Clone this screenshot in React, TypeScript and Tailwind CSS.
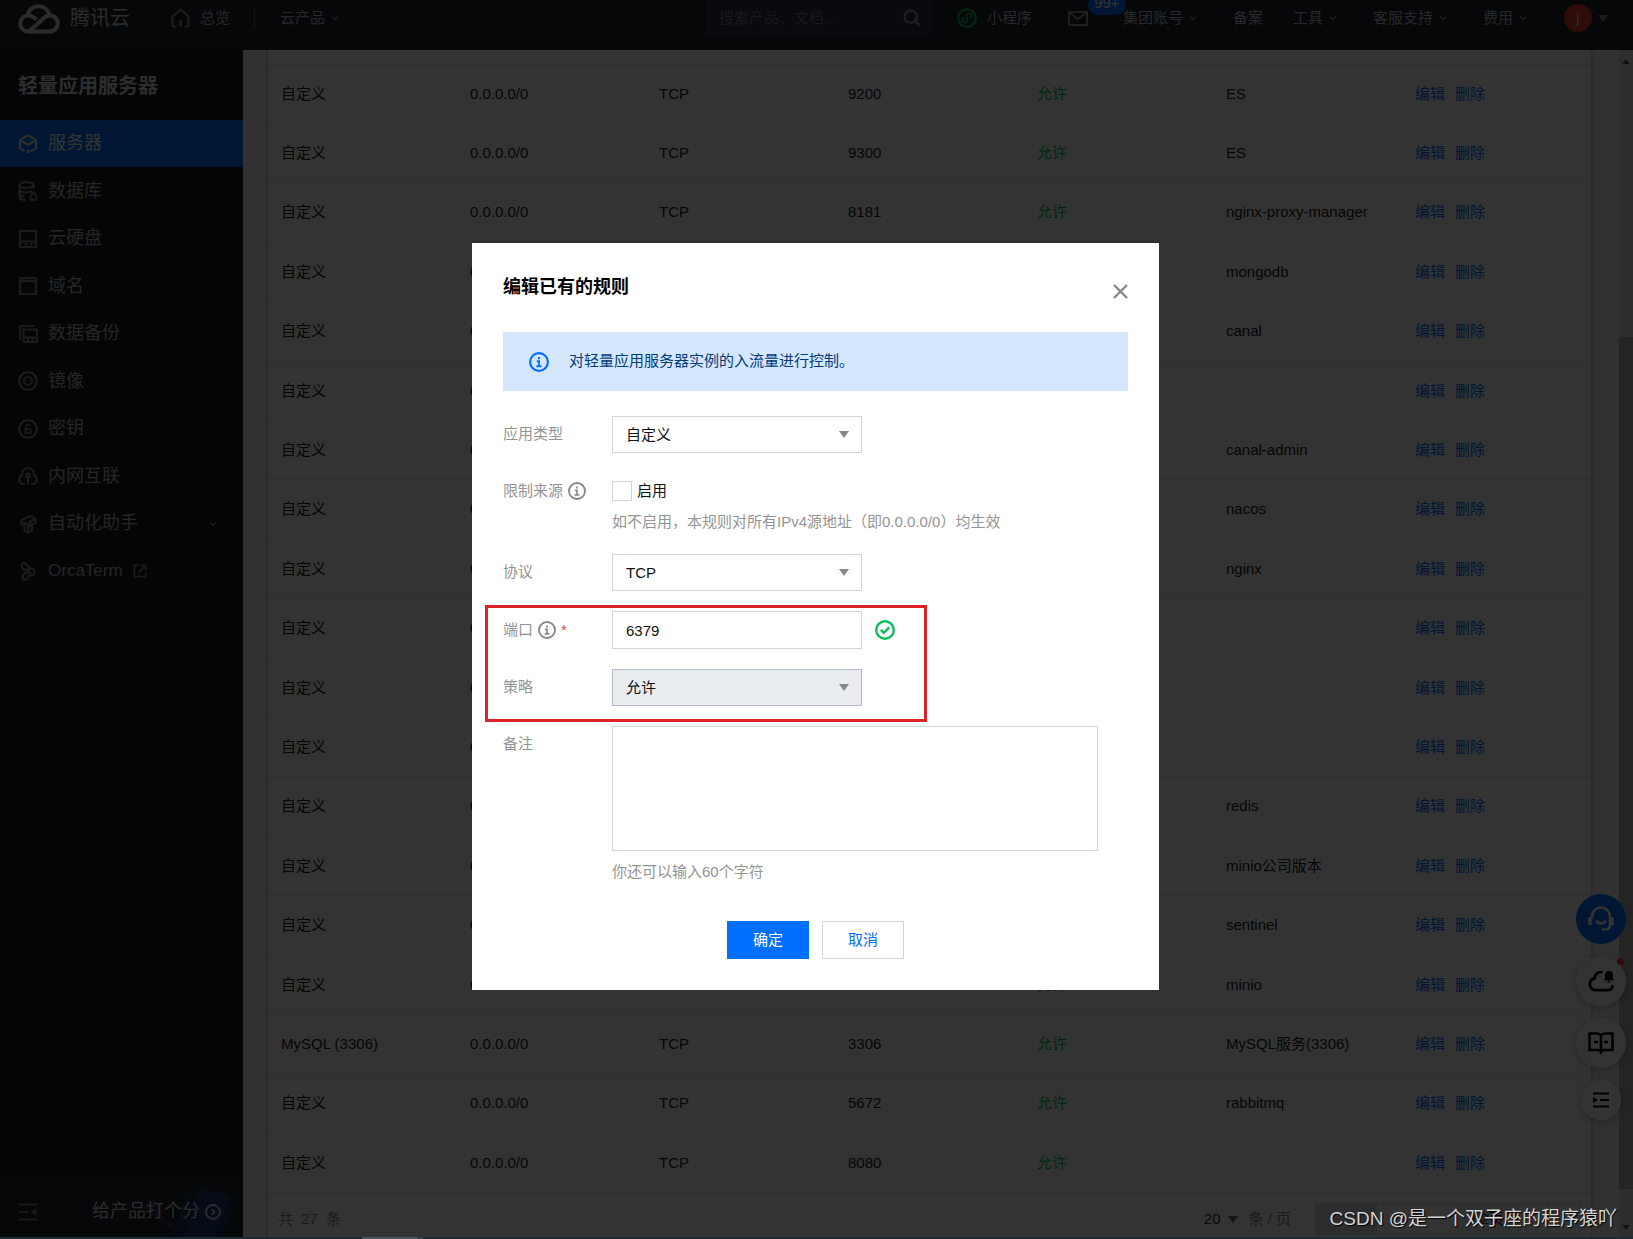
import React, { useState } from "react";

interface Rule {
  type: string;
  port: string;
  note: string;
}

const rules: Rule[] = [
  { type: "自定义", port: "9200", note: "ES" },
  { type: "自定义", port: "9300", note: "ES" },
  { type: "自定义", port: "8181", note: "nginx-proxy-manager" },
  { type: "自定义", port: "", note: "mongodb" },
  { type: "自定义", port: "", note: "canal" },
  { type: "自定义", port: "", note: "" },
  { type: "自定义", port: "", note: "canal-admin" },
  { type: "自定义", port: "", note: "nacos" },
  { type: "自定义", port: "", note: "nginx" },
  { type: "自定义", port: "", note: "" },
  { type: "自定义", port: "", note: "" },
  { type: "自定义", port: "", note: "" },
  { type: "自定义", port: "6379", note: "redis" },
  { type: "自定义", port: "", note: "minio公司版本" },
  { type: "自定义", port: "", note: "sentinel" },
  { type: "自定义", port: "", note: "minio" },
  { type: "MySQL (3306)", port: "3306", note: "MySQL服务(3306)" },
  { type: "自定义", port: "5672", note: "rabbitmq" },
  { type: "自定义", port: "8080", note: "" },
];

const Icon: React.FC<{ children: React.ReactNode; className?: string }> = ({
  children,
  className = "w-5 h-5",
}) => (
  <svg
    className={className}
    viewBox="0 0 20 20"
    fill="none"
    stroke="currentColor"
    strokeWidth={2.2}
    aria-hidden="true"
  >
    {children}
  </svg>
);

const Chevron = () => (
  <svg
    className="w-2 h-2 shrink-0 text-[#83888f]"
    viewBox="0 0 8 8"
    fill="none"
    stroke="currentColor"
    strokeWidth={1.5}
    aria-hidden="true"
  >
    <path d="M1 2.5l3 3 3-3" />
  </svg>
);

const Triangle = ({ className }: { className: string }) => (
  <svg className={className} viewBox="0 0 10 7" fill="currentColor" aria-hidden="true">
    <path d="M0 0h10L5 7z" />
  </svg>
);

const InfoIcon = ({ className }: { className: string }) => (
  <svg className={className} viewBox="0 0 20 20" fill="none" stroke="currentColor" aria-hidden="true">
    <circle cx="10" cy="10" r="8.9" strokeWidth={2.1} />
    <path d="M10 5v2.200M7.800 9.200H10v5M7.400 14.300h5.200" strokeWidth={1.9} />
  </svg>
);

const menu = [
  {
    label: "服务器",
    icon: (
      <>
        <path d="M6.500 17L2 14.300V5.800L10 1.300l8 4.500v8.500l-5 2.900" />
        <path d="M2.500 6.500L10 11l7.500-4.500" />
        <circle cx="10.500" cy="17.600" r="1.900" fill="currentColor" stroke="none" />
      </>
    ),
  },
  {
    label: "数据库",
    icon: (
      <>
        <ellipse cx="8.5" cy="4" rx="7" ry="2.8" />
        <path d="M1.5 4v4.500c0 1.500 3 2.800 7 2.800 2 0 4-.4 5.500-1M15.500 4v4M1.500 8.500v4.300c0 1.500 2 2.300 5 2.600M1.500 12.500v3.700c0 1.500 2.500 2.500 6 2.600M15.500 11.500c-2 2.500-3.200 3.600-3.200 5.200a2 2 0 0 0 2 2h2.400a2 2 0 0 0 2-2c0-1.600-1.200-2.700-3.200-5.200z" />
      </>
    ),
  },
  {
    label: "云硬盘",
    icon: <path d="M2 2h16v16H2zM2 12.500h16M7 15.300h2.500M12 15.300h2.500" />,
  },
  {
    label: "域名",
    icon: <path d="M2 2h16v16H2zM2 5h16M5 3.200v2M8.500 3.200v2" />,
  },
  {
    label: "数据备份",
    icon: <path d="M2 16V2h14M5.500 5.500H19V18H5.500zM5.500 13.500H19M9 15.800h2M13.500 15.800h2" />,
  },
  {
    label: "镜像",
    icon: (
      <>
        <circle cx="10" cy="10" r="8.8" />
        <circle cx="10" cy="10" r="4" />
      </>
    ),
  },
  {
    label: "密钥",
    icon: (
      <>
        <circle cx="10" cy="10" r="8.8" />
        <path d="M7.300 10h5.400v4H7.300zM8.200 10V7.500a1.900 1.900 0 0 1 3.700-.5" strokeWidth={1.7} />
      </>
    ),
  },
  {
    label: "内网互联",
    icon: (
      <>
        <path d="M7 18H5.500A4.500 4.500 0 0 1 4 9.300C4 4.800 6.500 2 10 2s6 2.800 6 7.300A4.500 4.500 0 0 1 14.500 18H13" />
        <circle cx="10" cy="9.5" r="1.8" />
        <path d="M10 11v8" />
      </>
    ),
  },
  {
    label: "自动化助手",
    icon: (
      <path d="M3 6.500L12 2l5.500 2.500v4.500L12 11.500V7.500L17 5M3 6.500V10l3 1.500V9l6 2.500M6.500 12v4.500l3.500 2 4-2V11M10 12v5" />
    ),
  },
  {
    label: "OrcaTerm",
    icon: (
      <path d="M4.500 7C2.500 3.500 4.500.8 7 2.500c2 1.400 4.500 3.500 4.500 5.500S7 9.500 4.500 7zM11 7c4 0 5.500 2 5.500 4s-2.500 3.500-5 4M12 11.500c-4-.5-7.500 1-7.500 4.500s4 3.500 5.500 1c1-1.500 2-3.500 2-5.500z" />
    ),
  },
];

function TopBar() {
  return (
    <header className="h-[50px] shrink-0 bg-[#22262f] text-[#c0c4cc] text-[15px] leading-9">
      <nav className="flex items-center h-9 pl-[18px] pr-[25px]">
        <a href="#home" className="flex items-center gap-2.5 text-[20px] text-[#d5d8de]">
          <svg className="w-[42px] h-[31px]" viewBox="0 0 42 31" fill="none" stroke="currentColor" strokeWidth={4} aria-hidden="true">
            <path d="M10 28.500a8 8 0 1 1 .5-16c3 0 5 1.200 8 4.200" />
            <path d="M9.500 12.500A11.200 11.200 0 0 1 31.500 12" />
            <path d="M10 28.500h22a8 8 0 1 0-5.500-14L11.500 28" />
          </svg>
          腾讯云
        </a>
        <a href="#overview" className="flex items-center gap-2.5 ml-[41px]">
          <svg className="w-[19px] h-5 text-[#9397a0]" viewBox="0 0 19 20" fill="none" stroke="currentColor" strokeWidth={2} aria-hidden="true">
            <path d="M5 18.500H1.500V8.500l8-7 8 7v10H14M9.500 12v7" />
          </svg>
          总览
        </a>
        <span className="w-px h-5 mx-6 bg-[#5a5f6a]" />
        <button type="button" className="flex items-center gap-1.5 ml-px">
          云产品 <Chevron />
        </button>
        <div className="flex items-center gap-9 ml-auto">
          <div className="flex items-center w-[225px] h-9 -mr-2.5 pl-[13px] pr-[10px] bg-[#2c3542]">
            <input
              type="text"
              aria-label="搜索"
              placeholder="搜索产品、文档..."
              className="flex-1 min-w-0 bg-transparent outline-none placeholder:text-[#747b88]"
            />
            <Icon className="w-[18px] h-[18px] text-[#8f949e]">
              <circle cx="8.5" cy="8.5" r="6.8" strokeWidth={2.5} />
              <path d="M13.500 13.500l5 5" strokeWidth={2.8} />
            </Icon>
          </div>
          <a href="#mini" className="flex items-center gap-2.5">
            <Icon className="w-5 h-5 text-[#0abf5b]">
              <circle cx="10" cy="10" r="8.8" />
              <path d="M10 12.500V7.500a2.200 2.200 0 1 1 2.500 2.200M10 7.500v5a2.200 2.200 0 1 1-2.500-2.200" strokeWidth={1.6} />
            </Icon>
            小程序
          </a>
          <a href="#messages" aria-label="99+" className="relative -mr-px">
            <svg className="w-5 h-[15px] text-[#9397a0]" viewBox="0 0 20 15" fill="none" stroke="currentColor" strokeWidth={2} aria-hidden="true">
              <path d="M1 1h18v13H1zM2 2l8 6 8-6" />
            </svg>
            <span className="absolute left-5 -top-4 w-[38px] h-5 rounded-full bg-[#006eff] text-white text-center leading-[15px]">
              99+
            </span>
          </a>
          <button type="button" className="flex items-center gap-1.5">
            集团账号 <Chevron />
          </button>
          <a href="#beian" className="-mr-1.5">
            备案
          </a>
          <button type="button" className="flex items-center gap-1.5">
            工具 <Chevron />
          </button>
          <button type="button" className="flex items-center gap-1.5">
            客服支持 <Chevron />
          </button>
          <button type="button" className="flex items-center gap-1.5 mr-px">
            费用 <Chevron />
          </button>
          <button type="button" className="flex items-center gap-1.5">
            <span className="w-7 h-7 rounded-full bg-[#e03c32] text-center leading-7 text-[#e6e8ec]">j</span>
            <Triangle className="w-2.5 h-[7px] text-[#83888f]" />
          </button>
        </div>
      </nav>
    </header>
  );
}

function Sidebar() {
  return (
    <aside className="flex flex-col w-[243px] shrink-0 bg-[#191c22] text-[18px] text-[#b4b8bf]">
      <h1 className="h-[70px] pl-[18px] text-[20px] leading-[72px] font-bold text-[#dcdee2]">轻量应用服务器</h1>
      <ul>
        {menu.map((item, i) => (
          <li key={item.label} className="h-[47px] even:h-[48px]">
            <a
              href={`#menu-${i}`}
              className={`flex items-center h-full pl-[18px] pr-[26px] gap-[10px] ${
                i === 0 ? "bg-[#006eff] text-white" : ""
              }`}
            >
              <Icon className={`w-5 h-5 ${i === 0 ? "text-[#dcdee2]" : "text-[#81858d]"}`}>{item.icon}</Icon>
              <span className={item.label === "OrcaTerm" ? "text-[17px]" : ""}>{item.label}</span>
              {item.label === "自动化助手" && (
                <span className="ml-auto">
                  <Chevron />
                </span>
              )}
              {item.label === "OrcaTerm" && (
                <Icon className="w-3.5 h-3.5 text-[#81858d]">
                  <path d="M8 2H2v16h16v-6M8 12L17 3M11.500 2H18v6.500" strokeWidth={2.5} />
                </Icon>
              )}
            </a>
          </li>
        ))}
      </ul>
      <div className="relative flex items-center h-[61px] mt-auto pl-[18px] pb-1 pt-2.5 bg-[#22262f] text-[#d5d8de]">
        <svg className="absolute right-0 bottom-0 w-[120px] h-[53px]" viewBox="0 0 120 53" aria-hidden="true">
          <path d="M4 16l12 5 16-7 10 10-4 6 16 12-12-2-14-14z" fill="#343b48" />
          <path d="M46 53L64 10l10-2 2-6 24 4 5 8 8-1-14 40z" fill="#1c3157" />
          <path d="M62 53L76 8l24-2 5 8-14 39z" fill="#203c72" />
        </svg>
        <button type="button" aria-label="收起" className="text-[#81858d]">
          <Icon>
            <path d="M1 2.500h18M1 10h9M1 17.500h18" />
            <path d="M18.500 6.500v7L13 10z" fill="currentColor" stroke="none" />
          </Icon>
        </button>
        <a href="#rate" className="relative flex items-center gap-[5px] ml-[54px]">
          给产品打个分
          <Icon className="w-4 h-4">
            <circle cx="10" cy="10" r="8.8" />
            <path d="M8.500 6.500L12 10l-3.500 3.500" />
          </Icon>
        </a>
      </div>
    </aside>
  );
}

function RuleTable() {
  return (
    <main className="flex flex-col flex-1 min-w-0 ml-[25px] mr-7 bg-white shadow-[0_0_4px_rgba(0,0,0,0.3)] text-[15px] text-[#222]">
      <table className="w-full mt-[14px] table-fixed border-t border-[#e4e4e4]">
        <tbody>
          {rules.map((rule, i) => (
            <tr
              key={i}
              className="h-[59px] nth-[5n]:h-[60px] nth-[5n+3]:h-[60px] border-b border-[#e4e4e4]"
            >
              <td className="pl-[13px]">{rule.type}</td>
              <td className="pl-[13px]">0.0.0.0/0</td>
              <td className="pl-[13px]">TCP</td>
              <td className="pl-[13px]">{rule.port}</td>
              <td className="pl-[13px] text-[#0abf5b]">允许</td>
              <td className="pl-[13px]">{rule.note}</td>
              <td className="pl-[13px]">
                <a href="#edit" className="mr-2.5 text-[#006eff]">
                  编辑
                </a>
                <a href="#delete" className="text-[#006eff]">
                  删除
                </a>
              </td>
            </tr>
          ))}
        </tbody>
      </table>
      <div className="flex items-center h-[52px] shrink-0 pl-2.5 pr-2.5 text-[#888]">
        <div className="flex gap-2">
          <span>共</span>
          <span>27</span>
          <span>条</span>
        </div>
        <button type="button" className="flex items-center gap-2 ml-auto text-[#222]">
          20 <Triangle className="w-2.5 h-[7px] text-[#666]" />
        </button>
        <span className="ml-2.5">条 / 页</span>
        <div className="flex h-8 ml-6 border border-[#cfd5de] text-[#222]">
          <button type="button" aria-label="首页" className="w-[30px] bg-[#dde2ea]" />
          <button type="button" aria-label="上一页" className="w-[31px] border-r border-[#cfd5de] bg-[#dde2ea]" />
          <input type="text" aria-label="页码" defaultValue="1" className="w-20 text-center outline-none" />
          <span className="w-[62px] border-x border-[#cfd5de] bg-[#eceef2] text-center leading-[30px]">/ 2页</span>
          <button type="button" aria-label="下一页" className="w-[30px] border-r border-[#cfd5de]" />
          <button type="button" aria-label="末页" className="w-[31px]" />
        </div>
      </div>
    </main>
  );
}

function FloatingTools() {
  return (
    <div className="absolute right-[7px] top-[894px] flex flex-col items-center gap-3 text-black">
      <button type="button" aria-label="客服" className="grid place-items-center w-[50px] h-[50px] rounded-full bg-[#006eff] text-white">
        <svg className="w-[26px] h-[26px]" viewBox="0 0 26 26" fill="none" stroke="currentColor" strokeWidth={2.6} aria-hidden="true">
          <path d="M4 12.500v-2a9 9 0 0 1 18 0v8c0 3-1.500 5-4.500 5H14" />
          <path d="M2 11v8M24 11v8" strokeWidth={3.5} />
          <path d="M8.500 14.500c1 2.500 2.500 3 4.500 3s3.500-.5 4.500-3" />
        </svg>
      </button>
      <button type="button" aria-label="消息" className="relative grid place-items-center w-[50px] h-[50px] rounded-full bg-white shadow-[0_2px_8px_rgba(0,0,0,0.25)]">
        <svg className="w-[26px] h-[24px]" viewBox="0 0 26 24" fill="none" stroke="currentColor" strokeWidth={2.8} aria-hidden="true">
          <path d="M14.500 3.500C10.500 2 7 5 6.500 9.500 3.500 10 1.800 12.500 1.800 15.200a6 6 0 0 0 6 6H20a4.500 4.500 0 0 0 4.500-5" />
          <path d="M17 10V6a4 4 0 0 1 8 0v4h1v1.300H16V10zM19.500 12h3v1.200h-3z" fill="currentColor" stroke="none" />
        </svg>
        <span className="absolute right-0.5 top-0.5 w-[7px] h-[7px] rounded-full bg-[#f23c3c]" />
      </button>
      <button type="button" aria-label="文档" className="grid place-items-center w-[50px] h-[50px] rounded-full bg-white shadow-[0_2px_8px_rgba(0,0,0,0.25)]">
        <svg className="w-[26px] h-[22px]" viewBox="0 0 26 22" fill="none" stroke="currentColor" strokeWidth={2.6} aria-hidden="true">
          <path d="M13 3.500C12 2 10.500 1.500 9 1.500H1.500v16.500H9c2 0 3.500.5 4 2 .5-1.500 2-2 4-2h7.500V1.500H17c-1.500 0-3 .5-4 2zM13 3.500V20M6 10h4M16 10h4" />
        </svg>
      </button>
      <button type="button" aria-label="展开" className="grid place-items-center w-10 h-10 rounded-full bg-white shadow-[0_2px_8px_rgba(0,0,0,0.25)]">
        <svg className="w-4 h-4" viewBox="0 0 16 16" fill="none" stroke="currentColor" strokeWidth={2} aria-hidden="true">
          <path d="M0 1.500h16M7 8h9M0 14.500h16" />
          <path d="M0 5v6l5-3z" fill="currentColor" stroke="none" />
        </svg>
      </button>
    </div>
  );
}

interface SelectFieldProps {
  id: string;
  options: string[];
  disabled?: boolean;
}

const SelectField: React.FC<SelectFieldProps> = ({ id, options, disabled }) => (
  <div className="relative w-[250px] h-[37px]">
    <select
      id={id}
      disabled={disabled}
      className="block w-full h-full pl-[13px] pr-8 appearance-none border border-[#cfd5de] bg-white text-[#111] opacity-100 disabled:bg-[#e9ecf1] disabled:border-[#b3bcc8] outline-none"
    >
      {options.map((option) => (
        <option key={option}>{option}</option>
      ))}
    </select>
    <Triangle className="absolute right-[13px] top-[15px] w-2.5 h-[7px] text-[#888] pointer-events-none" />
  </div>
);

function EditRuleDialog() {
  const [limited, setLimited] = useState(false);
  const [port, setPort] = useState("6379");
  const [note, setNote] = useState("");

  return (
    <form
      role="dialog"
      aria-label="编辑已有的规则"
      onSubmit={(e) => e.preventDefault()}
      className="w-[687px] px-[31px] pt-[31px] pb-[31px] bg-white text-[15px] text-[#111]"
    >
      <div className="flex justify-between mb-8">
        <h2 className="text-[18px] leading-[26px] font-bold text-black">编辑已有的规则</h2>
        <button type="button" aria-label="关闭" className="mt-2 text-[#888]">
          <svg className="w-[15px] h-[15px]" viewBox="0 0 15 15" fill="none" stroke="currentColor" strokeWidth={2.4} aria-hidden="true">
            <path d="M1 1l13 13M14 1L1 14" />
          </svg>
        </button>
      </div>

      <div className="flex items-center gap-5 h-[59px] mb-[25px] pl-[26px] bg-[#d5e7ff] text-[#003b80]">
        <InfoIcon className="w-5 h-5 text-[#006eff]" />
        对轻量应用服务器实例的入流量进行控制。
      </div>

      <div className="grid grid-cols-[109px_1fr] gap-y-5 text-[#949494] leading-9">
        <label htmlFor="app-type">应用类型</label>
        <SelectField id="app-type" options={["自定义"]} />

        <span className="flex items-center gap-[5px] h-9">
          限制来源 <InfoIcon className="w-[18px] h-[18px] text-[#888]" />
        </span>
        <div>
          <label className="flex items-center gap-[5px] h-9 text-[#111]">
            <input
              type="checkbox"
              checked={limited}
              onChange={(e) => setLimited(e.target.checked)}
              className="w-5 h-5 appearance-none border border-[#cfd5de] checked:bg-[#006eff]"
            />
            启用
          </label>
          <p className="mt-px leading-6">如不启用，本规则对所有IPv4源地址（即0.0.0.0/0）均生效</p>
        </div>

        <label htmlFor="protocol">协议</label>
        <SelectField id="protocol" options={["TCP"]} />

        <div className="relative grid grid-cols-subgrid col-span-2 gap-y-5">
          <label htmlFor="port" className="flex items-center gap-[5px]">
            端口 <InfoIcon className="w-[18px] h-[18px] text-[#888]" />
            <span className="text-[#e54545]">*</span>
          </label>
          <div className="flex items-center gap-[13px]">
            <input
              id="port"
              type="text"
              value={port}
              onChange={(e) => setPort(e.target.value)}
              className="w-[250px] h-[38px] px-[13px] border border-[#cfd5de] text-[#111] outline-none"
            />
            <Icon className="w-5 h-5 text-[#0abf5b]">
              <circle cx="10" cy="10" r="8.8" strokeWidth={2.4} />
              <path d="M5.800 9.800l3 3 5.400-5.400" strokeWidth={2.4} />
            </Icon>
          </div>
          <label htmlFor="policy">策略</label>
          <SelectField id="policy" options={["允许"]} disabled />
          <div className="absolute -left-[18px] -top-1.5 -bottom-4 w-[442px] border-3 border-[#dc2328] pointer-events-none" />
        </div>

        <label htmlFor="note">备注</label>
        <div>
          <textarea
            id="note"
            value={note}
            maxLength={60}
            onChange={(e) => setNote(e.target.value)}
            className="block w-[486px] h-[125px] p-2.5 resize-none border border-[#cfd5de] text-[#111] leading-6 outline-none"
          />
          <p className="mt-[9px] leading-6">你还可以输入{60 - note.length}个字符</p>
        </div>
      </div>

      <div className="flex justify-center gap-[13px] mt-[37px]">
        <button type="submit" className="w-[82px] h-[38px] bg-[#006eff] text-white">
          确定
        </button>
        <button type="button" className="w-[82px] h-[38px] border border-[#cfd5de] text-[#006eff]">
          取消
        </button>
      </div>
    </form>
  );
}

export default function App() {
  return (
    <div className="relative flex flex-col h-screen overflow-hidden bg-[#f2f2f2] font-['Liberation_Sans','Noto_Sans_CJK_SC',sans-serif]">
      <TopBar />
      <div className="flex flex-1 min-h-0">
        <Sidebar />
        <RuleTable />
        {/* scroll bar */}
        <div className="flex flex-col items-center w-[14px] shrink-0 py-[9px] bg-[#e6e6e6] text-[#505050]">
          <Triangle className="w-2.5 h-[5px] shrink-0 rotate-180" />
          <div className="flex-1 w-full mt-[273px] mb-9 bg-[#b4b4b4]" />
          <Triangle className="w-2.5 h-[5px] shrink-0" />
        </div>
      </div>
      <FloatingTools />

      <div className="absolute inset-0 flex justify-center items-start pt-[243px] pr-0.5 bg-black/80">
        <EditRuleDialog />
      </div>

      <div className="absolute inset-x-0 bottom-0 flex h-0.5 pl-[362px] bg-[#1c2b33]">
        <div className="w-14 bg-[#4c5358]" />
        <div className="w-1 ml-px bg-[#3a4247]" />
      </div>
      <p className="absolute right-4 bottom-2 text-[19px] leading-6 text-[#d4d4d4] [text-shadow:1px_1px_1px_#000]">
        CSDN @是一个双子座的程序猿吖
      </p>
    </div>
  );
}
